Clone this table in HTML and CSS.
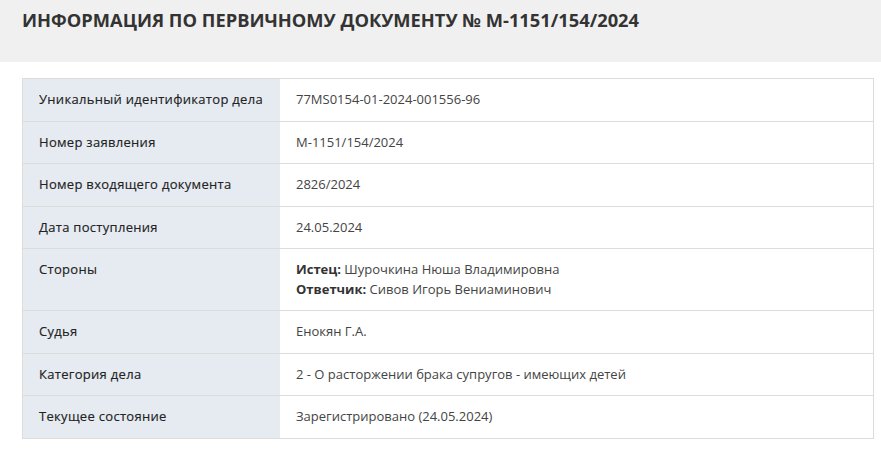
FILE: index.html
```html
<!DOCTYPE html>
<html lang="ru">
<head>
<meta charset="utf-8">
<link rel="stylesheet" href="styles.css">
</head>
<body>
<div class="header">
  <h1 class="title">ИНФОРМАЦИЯ ПО ПЕРВИЧНОМУ ДОКУМЕНТУ № М-1151/154/2024</h1>
</div>
<div class="content">
  <table class="info">
    <tr><td class="label">Уникальный идентификатор дела</td><td class="value">77MS0154-01-2024-001556-96</td></tr>
    <tr><td class="label">Номер заявления</td><td class="value">М-1151/154/2024</td></tr>
    <tr><td class="label">Номер входящего документа</td><td class="value">2826/2024</td></tr>
    <tr><td class="label">Дата поступления</td><td class="value">24.05.2024</td></tr>
    <tr><td class="label">Стороны</td><td class="value"><b>Истец:</b> Шурочкина Нюша Владимировна<br><b>Ответчик:</b> Сивов Игорь Вениаминович</td></tr>
    <tr><td class="label">Судья</td><td class="value">Енокян Г.А.</td></tr>
    <tr><td class="label">Категория дела</td><td class="value">2 - О расторжении брака супругов - имеющих детей</td></tr>
    <tr><td class="label">Текущее состояние</td><td class="value">Зарегистрировано (24.05.2024)</td></tr>
  </table>
</div>
</body>
</html>
```
FILE: styles.css
```css
html, body {
  margin: 0;
  padding: 0;
  background: #fff;
  font-family: "Open Sans", "Liberation Sans", sans-serif;
  color: #333;
}
.header {
  background: #f0f0f0;
  height: 62px;
  padding: 0 22px;
  box-sizing: border-box;
}
.title {
  margin: 0;
  padding-top: 7px;
  font-size: 18.3px;
  line-height: 26px;
  font-weight: 700;
  color: #333;
}
.content {
  padding: 16px 7px 0 22px;
}
.info {
  width: 852px;
  border-collapse: collapse;
  border: 1px solid #dcdcdc;
  font-size: 13px;
  line-height: 19.5px;
}
.info td {
  border-top: 1px solid #dcdcdc;
  padding: 11px 16px;
  vertical-align: top;
}
.info tr:first-child td {
  border-top: none;
}
.label {
  width: 225px;
  background: #e6ebf2;
  color: #222;
  letter-spacing: 0.3px;
  white-space: nowrap;
  -webkit-text-stroke: 0.15px #222;
}
.value {
  background: #fff;
  color: #444;
}
.value b {
  color: #333;
}
```
